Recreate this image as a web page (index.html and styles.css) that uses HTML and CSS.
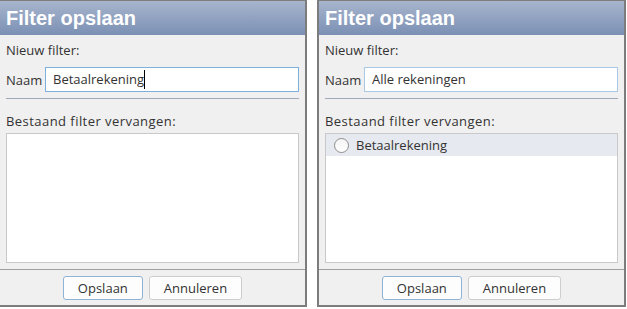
FILE: index.html
```html
<!DOCTYPE html>
<html lang="nl">
<head>
  <meta charset="UTF-8" />
  <title>Filter opslaan</title>
  <link rel="stylesheet" href="styles.css">
</head>
<body>
  <div class="dialogs">

    <div class="dialog first">
      <div class="dialog-header">Filter opslaan</div>
      <div class="dialog-body">
        <div class="section-label">Nieuw filter:</div>
        <div class="name-row">
          <span class="name-label">Naam</span>
          <div class="field focused">Betaalrekening<span class="caret"></span></div>
        </div>
        <div class="divider"></div>
        <div class="section-label replace">Bestaand filter vervangen:</div>
        <div class="filter-list"></div>
      </div>
      <div class="dialog-footer">
        <button class="btn default">Opslaan</button>
        <button class="btn">Annuleren</button>
      </div>
    </div>

    <div class="dialog">
      <div class="dialog-header">Filter opslaan</div>
      <div class="dialog-body">
        <div class="section-label">Nieuw filter:</div>
        <div class="name-row">
          <span class="name-label">Naam</span>
          <div class="field">Alle rekeningen</div>
        </div>
        <div class="divider"></div>
        <div class="section-label replace">Bestaand filter vervangen:</div>
        <div class="filter-list">
          <div class="filter-item">
            <span class="radio"></span>
            Betaalrekening
          </div>
        </div>
      </div>
      <div class="dialog-footer">
        <button class="btn default">Opslaan</button>
        <button class="btn">Annuleren</button>
      </div>
    </div>

  </div>
</body>
</html>
```

FILE: styles.css
```css
body {
  margin: 0;
  background: #fff;
  font-family: "Open Sans", "Noto Sans", sans-serif;
  font-size: 13px;
  color: #333;
}

.dialogs {
  display: flex;
  gap: 10px;
}

.dialog {
  width: 305px;
  border: 2px solid #7c7c7c;
  border-top-width: 1px;
  background: #f0f0f0;
}

.dialog.first {
  margin-left: -2px;
}

.dialog-header {
  height: 34px;
  line-height: 34px;
  padding-left: 6px;
  background: linear-gradient(#a7b5cd, #7b90b4);
  color: #fff;
  font-family: "Liberation Sans", Arial, sans-serif;
  font-weight: bold;
  font-size: 20px;
}

.dialog-body {
  padding: 5px 6px 6px;
}

.section-label {
  line-height: 20px;
}

.section-label.replace {
  margin-top: 12px;
  letter-spacing: 0.45px;
}

.name-row {
  display: flex;
  align-items: center;
  margin-top: 7px;
}

.name-label {
  width: 39px;
}

.field {
  flex: 1;
  height: 23px;
  line-height: 23px;
  padding: 0 7px;
  background: #fff;
  border: 1px solid #a9c8e6;
  display: flex;
  align-items: center;
}

.field.focused {
  border-color: #7eb0df;
}

.caret {
  display: inline-block;
  width: 1px;
  height: 19px;
  background: #000;
}

.divider {
  margin-top: 6px;
  border-top: 1px solid #9ea8b9;
}

.filter-list {
  height: 128px;
  margin-top: 2px;
  background: #fff;
  border: 1px solid #c9c9c9;
}

.filter-item {
  display: flex;
  align-items: center;
  gap: 7px;
  height: 22px;
  padding-left: 8px;
  background: #e6e9ef;
}

.radio {
  width: 13px;
  height: 13px;
  border: 1px solid #8e8e8e;
  border-radius: 50%;
  background: linear-gradient(#f4f4f4, #fff);
}

.dialog-footer {
  display: flex;
  justify-content: center;
  gap: 6px;
  height: 36px;
  padding-top: 6px;
  box-sizing: border-box;
  border-top: 1px solid #9f9f9f;
}

.btn {
  height: 24px;
  padding: 0 14px;
  font-family: inherit;
  font-size: 13px;
  color: #333;
  background: #fdfdfd;
  border: 1px solid #cdcdcd;
  border-radius: 3px;
}

.btn.default {
  border-color: #8fb2d6;
}
```
